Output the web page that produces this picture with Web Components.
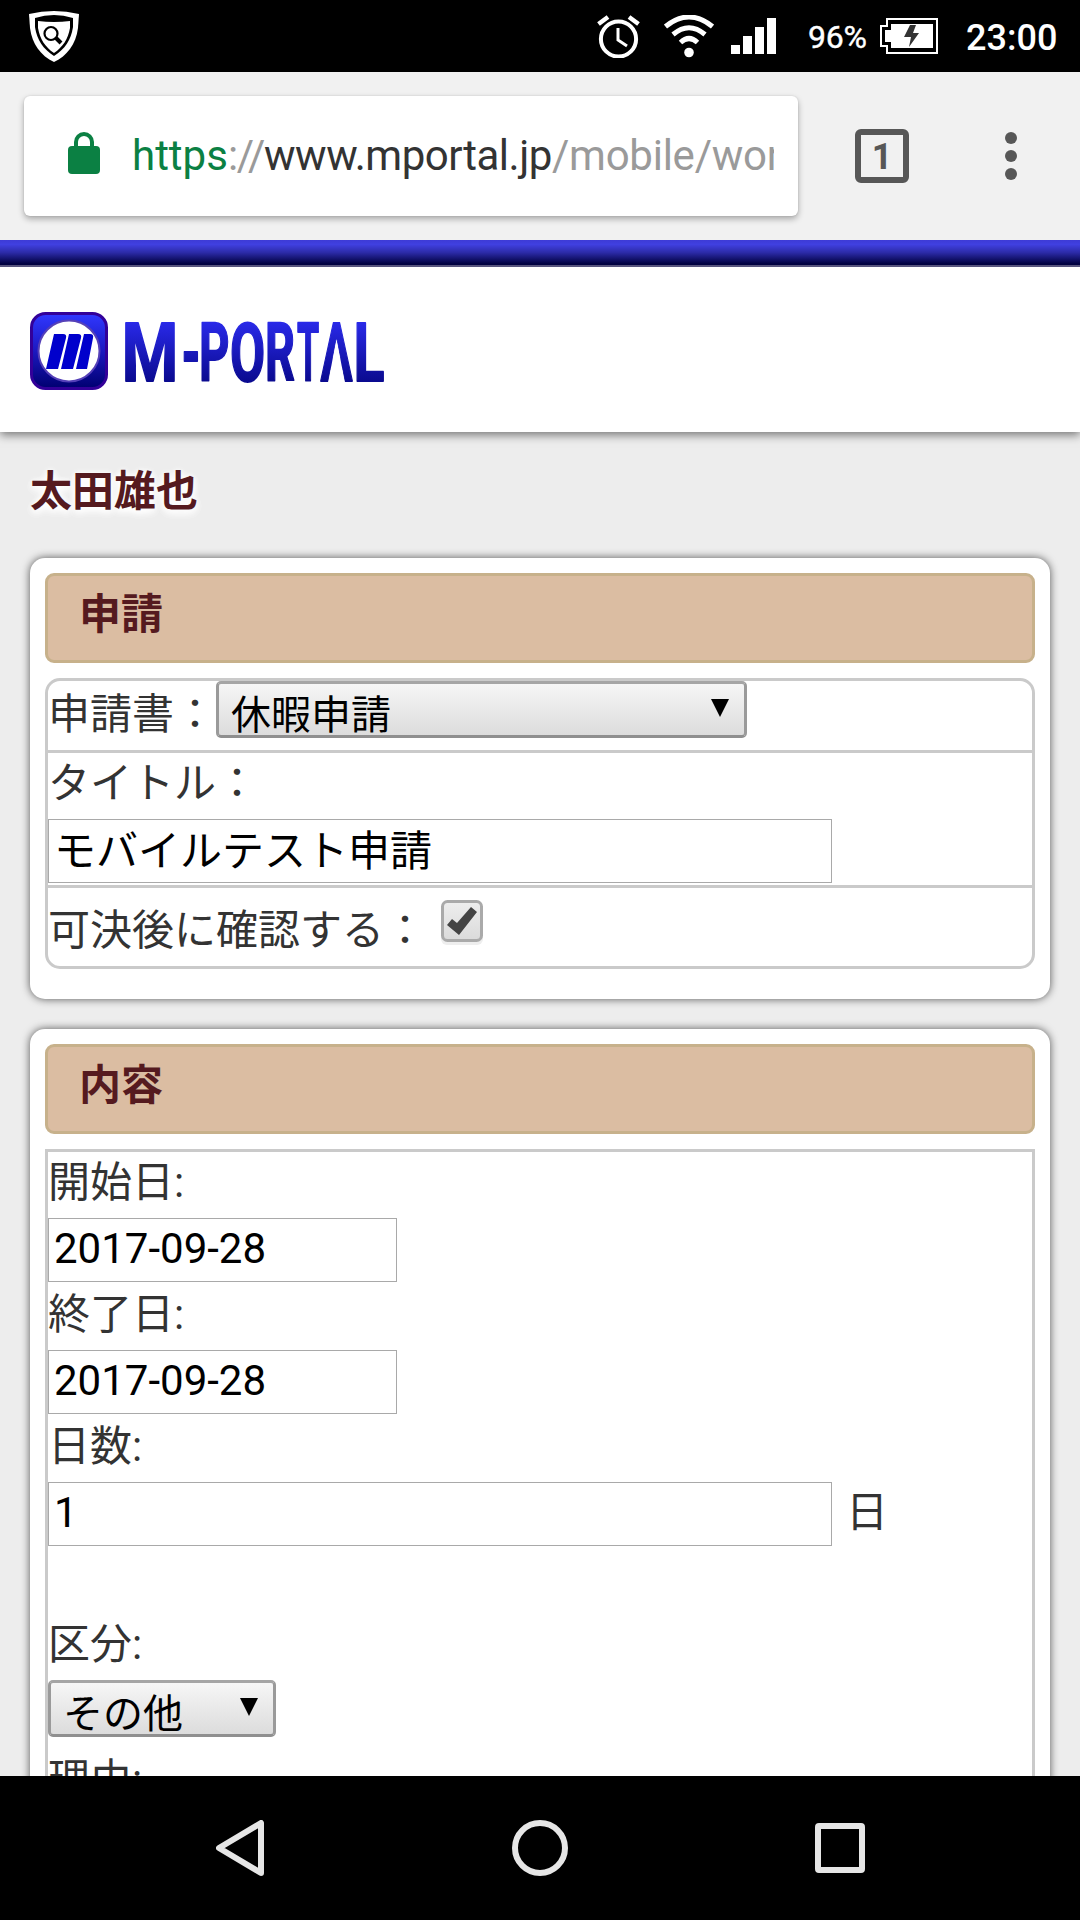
<!DOCTYPE html>
<html lang="ja">
<head>
<meta charset="utf-8">
<title>M-PORTAL</title>
<style>
html,body{margin:0;padding:0}
body{width:1080px;height:1920px;overflow:hidden;font-family:Roboto,"Noto Sans CJK JP",sans-serif;font-size:42px;color:#333;background:#ededed}
</style>
</head>
<body>
<phone-screen>
  <status-bar slot="status" battery="96%" time="23:00"></status-bar>
  <browser-toolbar slot="toolbar" tabs="1"></browser-toolbar>
  <portal-header></portal-header>
  <user-name>太田雄也</user-name>
  <form-card heading="申請">
    <form-table rounded>
      <form-row style="height:69px"><field-label style="line-height:67px">申請書：</field-label><select-box style="width:531px" value="休暇申請"></select-box></form-row>
      <form-row divided style="height:132px"><field-label block>タイトル：</field-label><text-box style="width:784px;line-height:64px">モバイルテスト申請</text-box></form-row>
      <form-row divided style="height:78px"><field-label style="line-height:86px">可決後に確認する：</field-label><check-box></check-box></form-row>
    </form-table>
  </form-card>
  <form-card heading="内容">
    <form-table>
      <form-row><field-label block>開始日:</field-label><text-box style="width:349px">2017-09-28</text-box></form-row>
      <form-row><field-label block>終了日:</field-label><text-box style="width:349px">2017-09-28</text-box></form-row>
      <form-row style="height:198px"><field-label block>日数:</field-label><text-box style="width:784px">1</text-box><field-label unit>日</field-label></form-row>
      <form-row style="height:135px"><field-label block>区分:</field-label><select-box style="width:228px" value="その他"></select-box></form-row>
      <form-row><field-label block>理由:</field-label></form-row>
    </form-table>
  </form-card>
  <nav-bar slot="nav"></nav-bar>
</phone-screen>
<script>
const define=(name,html,setup)=>customElements.define(name,class extends HTMLElement{
  constructor(){
    super();
    const t=document.createElement('template');
    t.innerHTML=html;
    this.attachShadow({mode:'open'}).append(t.content.cloneNode(true));
  }
  connectedCallback(){ if(setup) setup(this,this.shadowRoot); }
});
const fill=(...names)=>(el,root)=>names.forEach(n=>{root.querySelector('.'+n).textContent=el.getAttribute(n)||'';});

define('phone-screen',`<style>
:host{display:flex;flex-direction:column;width:1080px;height:1920px;overflow:hidden}
main{flex:1;min-height:0;overflow:hidden;background:#ededed}
</style><slot name="status"></slot><slot name="toolbar"></slot><main><slot></slot></main><slot name="nav"></slot>`);

define('status-bar',`<style>
:host{display:flex;align-items:flex-start;height:72px;background:#000;color:#fff;flex:none}
svg{display:block;flex:none}
.shield{margin:11px 0 0 29px}
.alarm{margin:15px 0 0 auto}
.wifi{margin:15px 0 0 24px}
.signal{margin:18px 0 0 17px}
.battery{width:58px;margin-left:32px;font-size:32px;line-height:75px;letter-spacing:-.2px;white-space:nowrap;-webkit-text-stroke:.4px #fff}
.cell{margin:18px 0 0 14px}
.time{width:91px;margin:0 23px 0 28px;font-size:36px;font-weight:500;line-height:76px;white-space:nowrap}
</style>
<svg class="shield" width="50" height="51" viewBox="0 0 50 51"><path d="M0 3Q25-3 50 3L49 17C47 33 38 45 25 51C12 45 3 33 1 17Z" fill="#fff"/><path d="M6 7Q25 1 44 7V16C42 29 36 38 25 45C14 38 8 29 6 16Z" fill="#000"/><path d="M9 10Q25 12 41 10V17C39 28 34 36 25 42C16 36 11 28 9 17Z" fill="#fff"/><circle cx="22" cy="22.500" r="6.500" fill="none" stroke="#000" stroke-width="2.200"/><path d="M27 27L32 32" stroke="#000" stroke-width="4"/></svg>
<svg class="alarm" width="43" height="43" viewBox="0 0 43 43" fill="none" stroke="#fff"><circle cx="21.500" cy="24" r="17.600" stroke-width="4"/><path d="M1.500 9L11 2M41.500 9L32 2" stroke-width="4.500"/><path d="M21 13V25L30 31" stroke-width="3"/></svg>
<svg class="wifi" width="50" height="43" viewBox="0 0 50 43" fill="none" stroke="#fff"><path d="M1.500 11.500Q25-7.500 48.500 11.500" stroke-width="5"/><path d="M9 19.500Q25 6 41 19.500" stroke-width="5"/><path d="M16.500 27.500Q25 19.500 33.500 27.500" stroke-width="5"/><circle cx="25" cy="37.500" r="4.800" fill="#fff" stroke="none"/></svg>
<svg class="signal" width="45" height="36" viewBox="0 0 45 36" fill="#fff"><path d="M0 27H9V36H0ZM12 18H21V36H12ZM24 9H33V36H24ZM36 0H45V36H36Z"/></svg>
<span class="battery"></span>
<svg class="cell" width="58" height="36" viewBox="0 0 58 36"><path d="M7 1H57V35H7V28H1V8H7Z" fill="#000" stroke="#fff" stroke-width="2"/><path d="M11 6H53V30H11V24H5V12H11Z" fill="#fff"/><path d="M30 7H36L33 15H39L29 29L31 19H24Z" fill="#333"/></svg>
<span class="time"></span>`,fill('battery','time'));

define('browser-toolbar',`<style>
:host{display:flex;align-items:center;height:168px;box-sizing:border-box;padding:0 63px 0 24px;background:#f1f1f1;flex:none}
.omnibox{display:flex;align-items:center;width:774px;height:120px;box-sizing:border-box;padding:0 24px 0 44px;background:#fff;border-radius:6px;box-shadow:0 3px 6px rgba(0,0,0,.3),0 0 2px rgba(0,0,0,.12)}
.lock{flex:none;margin:-6px 32px 0 0}
.url{flex:1;overflow:hidden;white-space:nowrap;font-size:42px;line-height:62px;color:#9a9a9a}
.s{color:#0b8043}.sep{letter-spacing:-1.4px}.h{color:#333;letter-spacing:-.45px}.p{letter-spacing:-.25px}
.tabs{display:flex;align-items:center;justify-content:center;box-sizing:border-box;width:54px;height:54px;margin-left:57px;border:6px solid #575757;border-radius:6px;color:#575757;font-size:36px;font-weight:700;line-height:44px}
.tabs span{padding-top:2px}
.more{display:flex;flex-direction:column;gap:6px;margin-left:auto}
.more i{width:12px;height:12px;border-radius:50%;background:#575757}
</style>
<div class="omnibox"><svg class="lock" width="32" height="42" viewBox="0 0 32 42"><rect y="14" width="32" height="28" rx="4" fill="#0b8043"/><path d="M8 16V10a8 8 0 0 1 16 0V16" fill="none" stroke="#0b8043" stroke-width="4"/></svg>
<div class="url"><span class="s">https</span><span class="sep">://</span><span class="h">www.mportal.jp</span><span class="p">/mobile/wor</span></div></div>
<div class="tabs"><span class="count"></span></div><div class="more"><i></i><i></i><i></i></div>`,(el,root)=>{root.querySelector('.count').textContent=el.getAttribute('tabs');});

define('portal-header',`<style>
:host{display:block;height:192px;background:#fff;box-shadow:0 3px 9px rgba(0,0,0,.5)}
.band{height:25px;background:linear-gradient(#3d3bd6,#4040e0 18%,#2c2ba8 50%,#000040 95%);border-bottom:2px solid #57547e}
svg{display:block;margin:45px 0 0 30px;overflow:visible}
text{font-family:Roboto,sans-serif;font-weight:700;font-size:82px}
</style><div class="band"></div>
<svg width="354" height="78" viewBox="0 0 354 78">
<defs>
<linearGradient id="a" x2="0" y2="1"><stop stop-color="#3038ff"/><stop offset=".5" stop-color="#1c18c0"/><stop offset="1" stop-color="#000070"/></linearGradient>
<linearGradient id="b" gradientUnits="userSpaceOnUse" x1="0" x2="0" y1="9" y2="69"><stop stop-color="#2a2aea"/><stop offset="1" stop-color="#0a0a90"/></linearGradient></defs>
<rect x="1.500" y="1.500" width="75" height="75" rx="14" fill="url(#a)" stroke="#330099" stroke-width="3"/>
<circle cx="39" cy="39" r="30.500" fill="#fff" stroke="#5540b8" stroke-width="2"/>
<path d="M24 22H33Q37 22 36 26L28 57H16ZM39 22H48Q52 22 51 26L43 57H31ZM54 22H60Q64 22 63 26L57 57H46Z" fill="#0000cc"/>
<text y="68.500" fill="url(#b)" stroke="url(#b)" stroke-width="1.800" stroke-linejoin="round"><tspan x="91.700" textLength="56.500" lengthAdjust="spacingAndGlyphs">M</tspan><tspan x="151.500" textLength="19" lengthAdjust="spacingAndGlyphs">-</tspan><tspan x="169" textLength="30.500" lengthAdjust="spacingAndGlyphs">P</tspan><tspan x="199.900" textLength="35.200" lengthAdjust="spacingAndGlyphs">O</tspan><tspan x="235.100" textLength="30" lengthAdjust="spacingAndGlyphs">R</tspan><tspan x="266.900" textLength="22.300" lengthAdjust="spacingAndGlyphs">T</tspan><tspan x="290.500" textLength="32" lengthAdjust="spacingAndGlyphs">A</tspan><tspan x="323.500" textLength="31" lengthAdjust="spacingAndGlyphs">L</tspan></text>
<path d="M306.500 27L315 71H298Z" fill="#fff"/>
</svg>`);

define('user-name',`<style>
:host{display:block;height:126px;padding-left:30px;font-weight:700;line-height:119px;color:#551a1f;text-shadow:0 3px 9px #fff,0 3px 9px #fff,0 0 6px #fff}
</style><slot></slot>`);

define('form-card',`<style>
:host{display:block;margin:0 30px 30px;padding:15px 15px 30px;border-radius:15px;background:#fff;box-shadow:0 0 9px rgba(0,0,0,.65)}
h2{margin:0 0 15px;box-sizing:border-box;height:90px;padding-left:31px;border:3px solid #c7b18b;border-radius:9px;background:#dbbda2;color:#551a1f;font-size:42px;font-weight:700;line-height:77px}
</style><h2 class="heading"></h2><slot></slot>`,fill('heading'));

define('form-table',`<style>
:host{display:block;border:3px solid #cacaca}
:host([rounded]){border-radius:15px}
</style><slot></slot>`);

define('form-row',`<style>
:host{display:flex;flex-wrap:wrap;align-items:flex-start;align-content:flex-start;height:132px}
:host([divided]){border-top:3px solid #cacaca}
</style><slot></slot>`);

define('field-label',`<style>
:host{display:block;height:66px;line-height:62px;white-space:nowrap}
:host([block]){width:100%}
:host([unit]){padding-left:14px}
</style><slot></slot>`);

define('text-box',`<style>
:host{display:block;box-sizing:border-box;height:64px;padding-left:5px;border:1px solid #a9a9a9;background:#fff;color:#000;line-height:60px;white-space:nowrap}
</style><slot></slot>`);

define('select-box',`<style>
:host{display:flex;justify-content:space-between;box-sizing:border-box;height:57px;padding:0 15px 0 12px;border:3px solid #999;border-color:#a5a5a5 #9a9a9a #8f8f8f;border-radius:5px;background:linear-gradient(#f6f6f6,#dcdcdc);color:#000;font-size:40px;line-height:64px;white-space:nowrap}
i{width:18px;height:18px;margin-top:15px;background:#000;clip-path:polygon(0 0,100% 0,50% 100%)}
</style><span class="value"></span><i></i>`,fill('value'));

define('check-box',`<style>
:host{display:block;margin:12px 0 0 15px}
svg{display:block}
</style><svg width="42" height="46" viewBox="0 0 42 46"><defs><linearGradient id="g" x2="0" y2="1"><stop stop-color="#eee"/><stop offset="1" stop-color="#dadada"/></linearGradient></defs><rect y="3" width="42" height="42" rx="6" fill="#eee"/><rect x="1.500" y="1.500" width="39" height="39" rx="5" fill="url(#g)" stroke="#aaa" stroke-width="3"/><path d="M6 25L11 19L16 23L30 7L36 12L18 35Z" fill="#444"/></svg>`);

define('nav-bar',`<style>
:host{display:flex;justify-content:space-between;align-items:center;height:144px;box-sizing:border-box;padding:0 215px 0 216px;background:#000;flex:none}
svg{display:block}
</style>
<svg width="48" height="56" viewBox="0 0 48 56"><path d="M45 3V53L3 28Z" fill="none" stroke="#e6e6e6" stroke-width="6" stroke-linejoin="round"/></svg>
<svg width="56" height="56" viewBox="0 0 56 56"><circle cx="28" cy="28" r="25" fill="none" stroke="#e6e6e6" stroke-width="6"/></svg>
<svg width="50" height="50" viewBox="0 0 50 50"><rect x="3" y="3" width="44" height="44" rx="1" fill="none" stroke="#e6e6e6" stroke-width="6" stroke-linejoin="round"/></svg>`);
</script>
</body>
</html>
